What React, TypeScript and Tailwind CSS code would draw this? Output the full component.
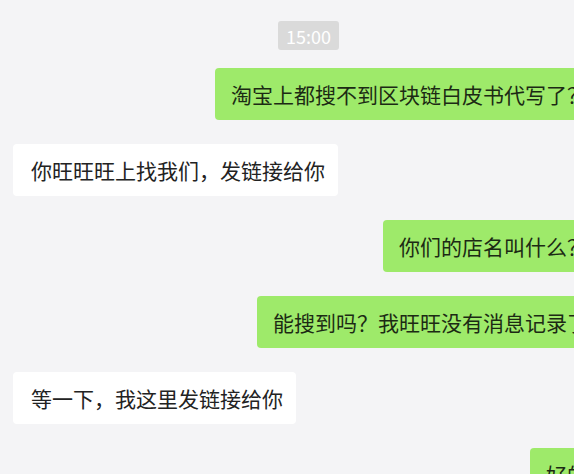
import React from "react";

const font = { fontFamily: '"Noto Sans CJK SC", "Noto Sans", sans-serif' };

function Right({ text }: { text: string }) {
  return (
    <div className="flex justify-end">
      <div className="h-[52px] flex items-center bg-[#9eea6a] rounded-[4px] pl-4 pr-[13px] text-[21px] text-[#1c2a14] whitespace-nowrap leading-none">
        {text}
      </div>
    </div>
  );
}

function Left({ text }: { text: string }) {
  return (
    <div className="flex justify-start">
      <div className="h-[52px] flex items-center bg-white rounded-[4px] pl-[18px] pr-[13px] text-[21px] text-[#222] whitespace-nowrap leading-none">
        {text}
      </div>
    </div>
  );
}

export default function App() {
  return (
    <div className="w-[574px] h-[474px] overflow-hidden bg-[#f4f4f6]" style={font}>
      <div className="w-[614px] pl-[13px] pr-[13px] pt-[21px] flex flex-col">
        <div className="flex justify-center">
          <div className="ml-[3px] h-[29px] px-[8px] flex items-center bg-[#dadada] rounded-[3px] text-white text-[18px] leading-none">
            15:00
          </div>
        </div>
        <div className="flex flex-col gap-[24px] mt-[18px]">
          <Right text="淘宝上都搜不到区块链白皮书代写了？" />
          <Left text="你旺旺旺上找我们，发链接给你" />
          <Right text="你们的店名叫什么？" />
          <Right text="能搜到吗？我旺旺没有消息记录了" />
          <Left text="等一下，我这里发链接给你" />
          <Right text="好的" />
        </div>
      </div>
    </div>
  );
}
